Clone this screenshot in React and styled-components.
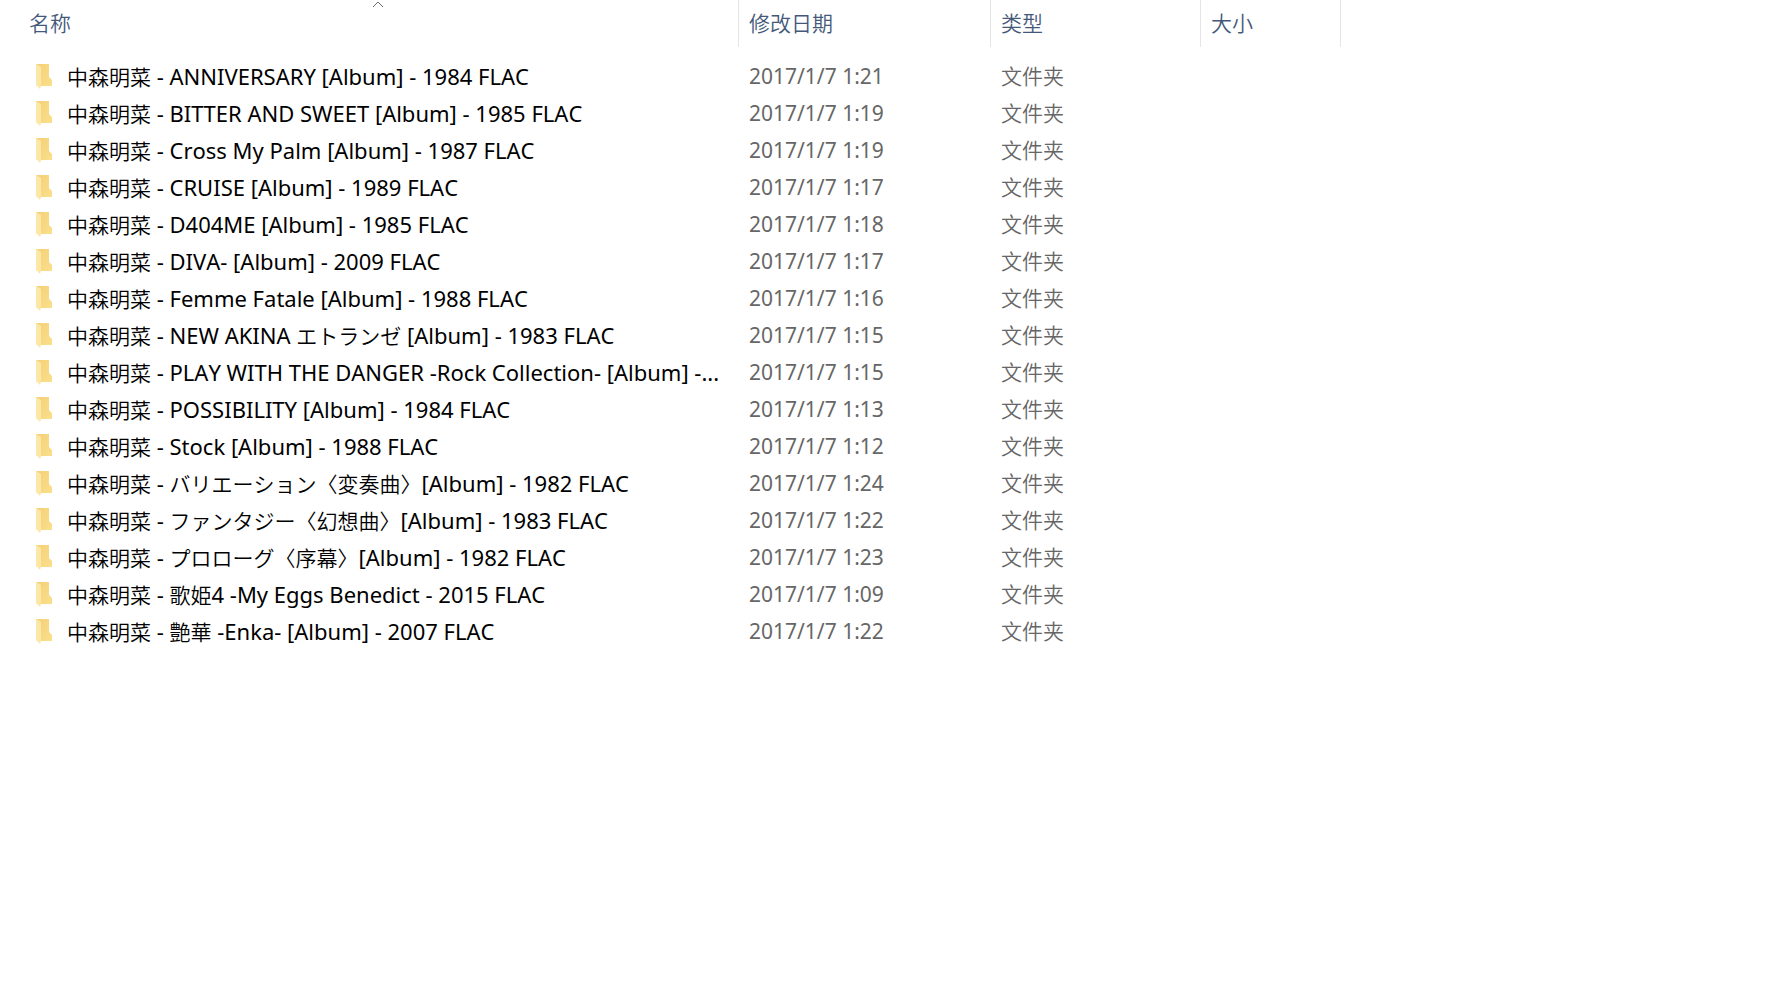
import React from 'react'
import styled, { createGlobalStyle } from 'styled-components'

const GlobalStyle = createGlobalStyle`
  body {
    margin: 0;
    background: #fff;
  }
`

const albums = [
  ['ANNIVERSARY [Album] - 1984 FLAC', '1:21'],
  ['BITTER AND SWEET [Album] - 1985 FLAC', '1:19'],
  ['Cross My Palm [Album] - 1987 FLAC', '1:19'],
  ['CRUISE [Album] - 1989 FLAC', '1:17'],
  ['D404ME [Album] - 1985 FLAC', '1:18'],
  ['DIVA- [Album] - 2009 FLAC', '1:17'],
  ['Femme Fatale [Album] - 1988 FLAC', '1:16'],
  ['NEW AKINA エトランゼ [Album] - 1983 FLAC', '1:15'],
  ['PLAY WITH THE DANGER -Rock Collection- [Album] -...', '1:15'],
  ['POSSIBILITY [Album] - 1984 FLAC', '1:13'],
  ['Stock [Album] - 1988 FLAC', '1:12'],
  ['バリエーション〈変奏曲〉[Album] - 1982 FLAC', '1:24'],
  ['ファンタジー〈幻想曲〉[Album] - 1983 FLAC', '1:22'],
  ['プロローグ〈序幕〉[Album] - 1982 FLAC', '1:23'],
  ['歌姫4 -My Eggs Benedict - 2015 FLAC', '1:09'],
  ['艶華 -Enka- [Album] - 2007 FLAC', '1:22']
]

const FileTable = styled.table`
  width: 100%;
  table-layout: fixed;
  border-collapse: separate;
  border-spacing: 0;
  font-family: 'Noto Sans', 'Noto Sans CJK SC', sans-serif;
  font-size: 21px;
  font-kerning: none;
  line-height: 37px;
  color: #666;
`

const Column = styled.col`
  width: ${props => props.$width};
`

const HeadCell = styled.th`
  position: relative;
  height: 47px;
  padding: 0 0 0 ${props => (props.$first ? '29px' : '10px')};
  border-right: 1px solid ${props => (props.$last ? 'transparent' : '#e5e5e5')};
  font-weight: 350;
  text-align: left;
  color: #44597a;
`

const SortArrow = styled.svg`
  position: absolute;
  top: 1px;
  left: 50%;
  width: 12px;
  height: 7px;
  margin-left: 3px;
`

const Body = styled.tbody`
  &::before {
    content: '';
    display: block;
    height: 11px;
  }
`

const Cell = styled.td`
  height: 37px;
  padding: 0 0 0 10px;
  white-space: nowrap;
`

const TypeCell = styled(Cell)`
  font-weight: 350;
`

const FileName = styled.div`
  display: flex;
  align-items: center;
  gap: 15px;
  height: 37px;
  padding-left: 26px;
  font-size: 22px;
  color: #000;
`

const EastAsian = styled.span`
  font-size: 21px;
  font-weight: 350;
`

const FolderSvg = styled.svg`
  flex: none;
  width: 16px;
  height: 25px;
`

const FolderIcon = () => (
  <FolderSvg viewBox='0 0 16 25' aria-hidden='true'>
    <defs>
      <linearGradient id='folder' x1='0' y1='0' x2='1' y2='1'>
        <stop offset='0' stopColor='#f3d078' />
        <stop offset='1' stopColor='#fbdf8a' />
      </linearGradient>
    </defs>
    <path d='M0 0h13v13l3 3v6H4l-4-1z' fill='url(#folder)' />
    <path d='M0 0l5 3v19l-1 3-4-4z' fill='#fde7a6' />
  </FolderSvg>
)

// kanji and kana are set a size smaller than the latin text beside them
const MixedText = ({ text }) =>
  text
    .split(/([\u3000-\u9fff]+)/)
    .map((part, i) => (i % 2 ? <EastAsian key={i}>{part}</EastAsian> : part))

const App = () => (
  <>
    <GlobalStyle />
    <FileTable>
      <colgroup>
        <Column $width='739px' />
        <Column $width='252px' />
        <Column $width='210px' />
        <Column $width='140px' />
        <Column />
      </colgroup>
      <thead>
        <tr>
          <HeadCell $first aria-sort='ascending'>
            名称
            <SortArrow viewBox='0 0 12 7' aria-hidden='true'>
              <path d='M1 6l5-5 5 5' fill='none' stroke='#6d6d6d' />
            </SortArrow>
          </HeadCell>
          <HeadCell>修改日期</HeadCell>
          <HeadCell>类型</HeadCell>
          <HeadCell>大小</HeadCell>
          <HeadCell $last />
        </tr>
      </thead>
      <Body>
        {albums.map(([title, time]) => (
          <tr key={title}>
            <Cell>
              <FileName>
                <FolderIcon />
                <span>
                  <MixedText text={`中森明菜 - ${title}`} />
                </span>
              </FileName>
            </Cell>
            <Cell>2017/1/7 {time}</Cell>
            <TypeCell>文件夹</TypeCell>
          </tr>
        ))}
      </Body>
    </FileTable>
  </>
)

export default App
